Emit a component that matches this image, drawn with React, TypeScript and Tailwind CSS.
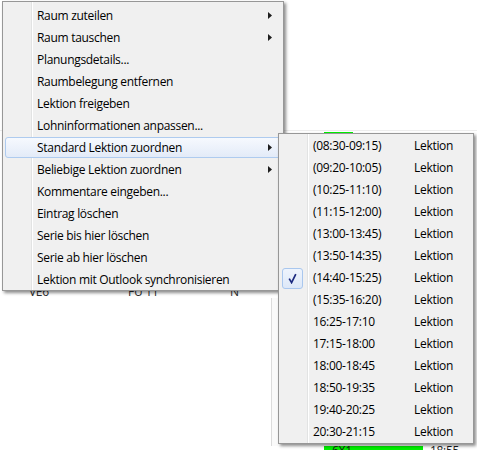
import React from "react";

type MainItem = { label: string; sub?: boolean; active?: boolean };

const mainItems: MainItem[] = [
  { label: "Raum zuteilen", sub: true },
  { label: "Raum tauschen", sub: true },
  { label: "Planungsdetails..." },
  { label: "Raumbelegung entfernen" },
  { label: "Lektion freigeben" },
  { label: "Lohninformationen anpassen..." },
  { label: "Standard Lektion zuordnen", sub: true, active: true },
  { label: "Beliebige Lektion zuordnen", sub: true },
  { label: "Kommentare eingeben..." },
  { label: "Eintrag löschen" },
  { label: "Serie bis hier löschen" },
  { label: "Serie ab hier löschen" },
  { label: "Lektion mit Outlook synchronisieren" },
];

const slots: { time: string; checked?: boolean }[] = [
  { time: "(08:30-09:15)" },
  { time: "(09:20-10:05)" },
  { time: "(10:25-11:10)" },
  { time: "(11:15-12:00)" },
  { time: "(13:00-13:45)" },
  { time: "(13:50-14:35)" },
  { time: "(14:40-15:25)", checked: true },
  { time: "(15:35-16:20)" },
  { time: "16:25-17:10" },
  { time: "17:15-18:00" },
  { time: "18:00-18:45" },
  { time: "18:50-19:35" },
  { time: "19:40-20:25" },
  { time: "20:30-21:15" },
];

function Arrow() {
  return (
    <svg width="4" height="7" viewBox="0 0 4 7" className="ml-auto mr-[8px] shrink-0">
      <polygon points="0,0 4,3.5 0,7" fill="#1e1e1e" />
    </svg>
  );
}

function Gutter() {
  return (
    <div className="pointer-events-none absolute top-0 bottom-0 left-[28px] w-[2px] border-l border-r border-l-[#e2e3e3] border-r-white" />
  );
}

function Check() {
  return (
    <div className="flex h-[21px] w-[21px] items-center justify-center rounded-[3px] border border-[#a9c7ee] bg-gradient-to-b from-[#eef4fd] to-[#dde8f8]">
      <svg width="9" height="11" viewBox="0 0 9 11">
        <path d="M1.2 5.6 L3.6 9.6 L7.8 1.2" fill="none" stroke="#1c2a80" strokeWidth="1.7" strokeLinejoin="miter" />
      </svg>
    </div>
  );
}

export default function App() {
  return (
    <div className="relative h-[450px] w-[477px] overflow-hidden bg-white font-['Open_Sans',sans-serif] text-[12px] tracking-[-0.3px] text-black">
      {/* timetable grid behind the menus */}
      <div className="flex flex-col">
        <div className="h-[130px]" />
        <div className="h-px bg-[#ededed]" />
        <div className="h-px" />
        <div className="ml-[324px] h-[2px] w-[29px] bg-[#00f000]" />
        <div className="h-[152px]" />
        <div className="flex h-[12px] overflow-hidden leading-[12px] text-[#2a2a2a]">
          <span className="ml-[29px] w-[99px]">VE6</span>
          <span className="w-[102px]">FU 11</span>
          <span>N</span>
        </div>
        <div className="flex h-[148px]">
          <div className="ml-[271px] w-[7px] border-l border-l-[#dcdcdc] bg-[#fafafa]" />
        </div>
        <div className="flex h-[4px] leading-[10px] text-[#1a1a1a]">
          <div className="ml-[324px] w-[99px] bg-[#00f000] pl-[8px]">6X1</div>
          <div className="pl-[7px]">18:55</div>
        </div>
      </div>

      {/* context menu */}
      <div className="absolute left-[2px] top-[1px] w-[282px] border border-[#979797] bg-[#f0f0f0] px-[2px] pt-[2px] shadow-[2px_2px_3px_rgba(0,0,0,0.45)]">
        <Gutter />
        <div className="relative flex flex-col">
          {mainItems.map((it) => (
            <div key={it.label} className="h-[22px] pt-[1px]">
              <div
                className={
                  it.active
                    ? "flex h-[21px] items-center rounded-[3px] border border-[#aecbef] bg-gradient-to-b from-[#f6f9fe] to-[#e3ebf8]"
                    : "flex h-[21px] items-center rounded-[3px] border border-transparent"
                }
              >
                <span className="pl-[31px] whitespace-nowrap">{it.label}</span>
                {it.sub && <Arrow />}
              </div>
            </div>
          ))}
        </div>
      </div>

      {/* submenu: standard lesson slots */}
      <div className="absolute left-[278px] top-[133px] w-[196px] border border-[#979797] bg-[#f0f0f0] px-[2px] pt-[1px] shadow-[2px_2px_3px_rgba(0,0,0,0.45)]">
        <Gutter />
        <div className="relative flex flex-col">
          {slots.map((s) => (
            <div key={s.time} className="flex h-[22px] items-center">
              <div className="flex w-[32px] shrink-0 pl-[1px]">{s.checked && <Check />}</div>
              <span className="w-[101px] shrink-0 whitespace-nowrap">{s.time}</span>
              <span>Lektion</span>
            </div>
          ))}
        </div>
      </div>
    </div>
  );
}
